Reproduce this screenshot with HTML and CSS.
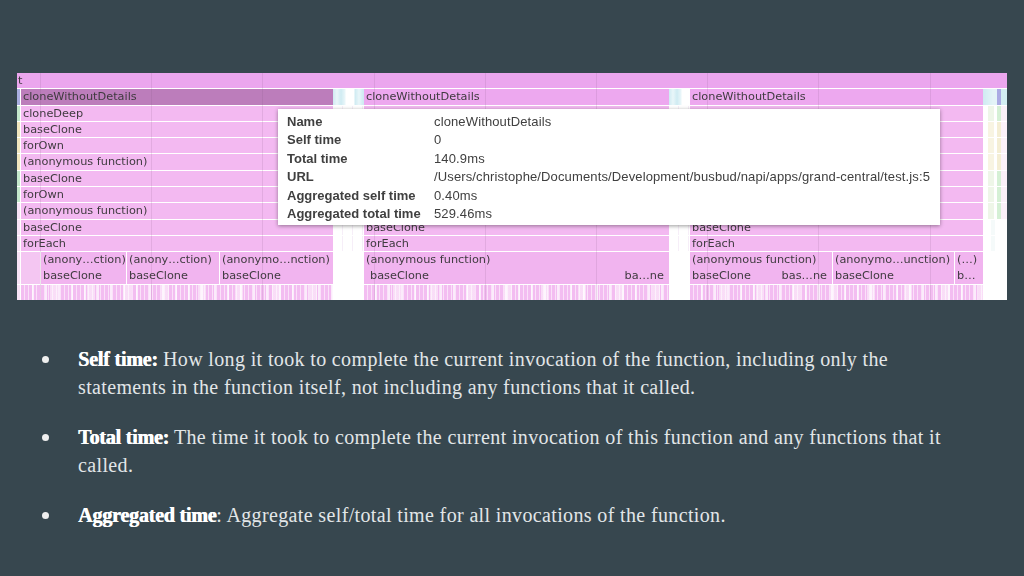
FILE: index.html
```html
<!DOCTYPE html>
<html>
<head>
	<meta charset="utf-8">
	<title>Self time and total time</title>
	<link rel="stylesheet" href="styles.css">
</head>
<body>
	<div class="chart">
		<div class="row row-top"><div class="bar bar-top">t</div></div>

		<div class="row">
			<div class="edge edge-blue"></div>
			<div class="bar bar-selected">cloneWithoutDetails</div>
			<div class="noise noise-cyan"></div>
			<div class="bar bar-strong">cloneWithoutDetails</div>
			<div class="noise noise-cyan"></div>
			<div class="bar bar-strong">cloneWithoutDetails</div>
			<div class="noise noise-end"></div>
		</div>

		<div class="row"><div class="edge edge-green"></div><div class="bar">cloneDeep</div><div class="noise"></div><div class="bar"></div><div class="noise"></div><div class="bar"></div><div class="noise noise-green"></div></div>
		<div class="row"><div class="edge edge-yellow"></div><div class="bar">baseClone</div><div class="noise"></div><div class="bar"></div><div class="noise"></div><div class="bar"></div><div class="noise noise-yellow"></div></div>
		<div class="row"><div class="edge edge-yellow"></div><div class="bar">forOwn</div><div class="noise"></div><div class="bar"></div><div class="noise"></div><div class="bar"></div><div class="noise noise-yellow"></div></div>
		<div class="row"><div class="edge edge-yellow"></div><div class="bar">(anonymous function)</div><div class="noise"></div><div class="bar"></div><div class="noise"></div><div class="bar"></div><div class="noise noise-yellow"></div></div>
		<div class="row"><div class="edge edge-green"></div><div class="bar">baseClone</div><div class="noise"></div><div class="bar"></div><div class="noise"></div><div class="bar"></div><div class="noise noise-green"></div></div>
		<div class="row"><div class="edge edge-green"></div><div class="bar">forOwn</div><div class="noise"></div><div class="bar"></div><div class="noise"></div><div class="bar"></div><div class="noise noise-green"></div></div>
		<div class="row"><div class="edge"></div><div class="bar">(anonymous function)</div><div class="noise"></div><div class="bar"></div><div class="noise"></div><div class="bar"></div><div class="noise noise-green"></div></div>
		<div class="row"><div class="edge"></div><div class="bar">baseClone</div><div class="noise"></div><div class="bar">baseClone</div><div class="noise"></div><div class="bar">baseClone</div><div class="noise noise-faint"></div></div>
		<div class="row"><div class="edge"></div><div class="bar">forEach</div><div class="noise"></div><div class="bar">forEach</div><div class="noise"></div><div class="bar">forEach</div><div class="noise noise-faint"></div></div>

		<div class="row">
			<div class="edge"></div>
			<div class="split split-left">
				<div class="bar bar-low bar-empty"></div>
				<div class="bar bar-low">(anony…ction)</div>
				<div class="bar bar-low">(anony…ction)</div>
				<div class="bar bar-low">(anonymo…nction)</div>
			</div>
			<div class="blank"></div>
			<div class="bar bar-low">(anonymous function)</div>
			<div class="blank"></div>
			<div class="split split-right">
				<div class="bar bar-low">(anonymous function)</div>
				<div class="bar bar-low">(anonymo…unction)</div>
				<div class="bar bar-low">(…)</div>
			</div>
			<div class="blank"></div>
		</div>

		<div class="row">
			<div class="edge"></div>
			<div class="split split-left">
				<div class="bar bar-low bar-empty"></div>
				<div class="bar bar-low">baseClone</div>
				<div class="bar bar-low">baseClone</div>
				<div class="bar bar-low">baseClone</div>
			</div>
			<div class="blank"></div>
			<div class="bar bar-low bar-ends"><span class="nudge">baseClone</span><span>ba…ne</span></div>
			<div class="blank"></div>
			<div class="split split-right">
				<div class="bar bar-low bar-ends"><span>baseClone</span><span>bas…ne</span></div>
				<div class="bar bar-low">baseClone</div>
				<div class="bar bar-low">b…</div>
			</div>
			<div class="blank"></div>
		</div>

		<div class="row">
			<div class="edge"></div>
			<div class="code"></div>
			<div class="blank"></div>
			<div class="code"></div>
			<div class="blank"></div>
			<div class="code"></div>
			<div class="blank"></div>
		</div>

		<div class="ticks"></div>

		<div class="tooltip">
			<div class="tip-key">Name</div><div class="tip-val">cloneWithoutDetails</div>
			<div class="tip-key">Self time</div><div class="tip-val">0</div>
			<div class="tip-key">Total time</div><div class="tip-val">140.9ms</div>
			<div class="tip-key">URL</div><div class="tip-val">/Users/christophe/Documents/Development/busbud/napi/apps/grand-central/test.js:5</div>
			<div class="tip-key">Aggregated self time</div><div class="tip-val">0.40ms</div>
			<div class="tip-key">Aggregated total time</div><div class="tip-val">529.46ms</div>
		</div>
	</div>

	<ul class="notes">
		<li><p><b>Self time:</b><span> How long it took to complete the current invocation of the function, including only the</span><span class="next-line">statements in the function itself, not including any functions that it called.</span></p></li>
		<li><p><b>Total time:</b><span> The time it took to complete the current invocation of this function and any functions that it</span><span class="next-line">called.</span></p></li>
		<li><p><b>Aggregated time</b><span>: Aggregate self/total time for all invocations of the function.</span></p></li>
	</ul>
</body>
</html>
```

FILE: styles.css
```css
*
{
	box-sizing: border-box;
}
body
{
	margin: 0px;
	width: 1024px;
	height: 576px;
	overflow: hidden;
	background-color: #37474F;
	padding: 73px 17px 0px 17px;
}
p
{
	margin: 0px;
}

/* flame chart */
.chart
{
	position: relative;
	width: 990px;
	height: 227px;
	background-color: #FFFFFF;
	display: grid;
	grid-template-rows: repeat(14, 1fr);
	row-gap: 1px;
	font-family: "DejaVu Sans", sans-serif;
	font-size: 11.3px;
	color: #3F3A3F;
	filter: blur(0.4px);
}
.row
{
	display: grid;
	grid-template-columns: 4px 312px 31px 305px 21px 293px 24px;
	min-height: 0px;
}
.row-top
{
	display: block;
}
.bar
{
	background-color: #F3B9F1;
	padding-left: 2px;
	line-height: 16px;
	white-space: nowrap;
	overflow: hidden;
	min-width: 0px;
}
.bar-top
{
	height: 100%;
	padding-left: 1px;
	background-color: #EBA6EE;
}
.bar-selected
{
	background-color: #BC7DBB;
	padding-left: 2px;
}
.bar-strong
{
	background-color: #EDA8EF;
}
.bar-low
{
	background-color: #F1B4EF;
}
.bar-empty
{
	background-color: #F4C6F2;
}
.bar-ends
{
	display: flex;
	justify-content: space-between;
	padding-right: 5px;
}
.nudge
{
	margin-left: 4px;
}
.split
{
	display: grid;
	column-gap: 1px;
	min-width: 0px;
}
.split-left
{
	grid-template-columns: 19px 85px 92px 1fr;
}
.split-right
{
	grid-template-columns: 142px 121px 1fr;
	column-gap: 1px;
}

/* thin left column */
.edge
{
	background-color: #F7E3F6;
	margin-right: 1px;
}
.edge-blue
{
	background-color: #A9AEE0;
}
.edge-green
{
	background-color: #C4E8CC;
}
.edge-yellow
{
	background-color: #F1E6BE;
}

/* narrow calls between the bars */
.noise
{
	background: repeating-linear-gradient(90deg, transparent 0px, transparent 9px, #F6EEF8 9px, #F6EEF8 10px);
}
.noise-cyan
{
	background: linear-gradient(90deg, #CFEBF2 0px, #E9F6F9 4px, #CFEBF2 8px, #E9F6F9 12px, #FFFFFF 13px, #FFFFFF 21px, #CFEBF2 22px, #E9F6F9 26px, #CFEBF2 30px);
}
.noise-end
{
	background: linear-gradient(90deg, #CFEBF2 0px, #E4F4F7 10px, #E4F4F7 14px, #ABABE3 14px, #ABABE3 18px, #D3EEF2 18px, #D3EEF2 24px);
}
.noise-green
{
	background: linear-gradient(90deg, #FFFFFF 0px, #FFFFFF 5px, #EEF6E8 5px, #EEF6E8 11px, #FFFFFF 11px, #FFFFFF 14px, #D5F0D5 14px, #D5F0D5 18px, #FBF1F9 18px);
}
.noise-yellow
{
	background: linear-gradient(90deg, #FFFFFF 0px, #FFFFFF 5px, #F8F4E2 5px, #F8F4E2 11px, #FFFFFF 11px, #FFFFFF 14px, #F4EED4 14px, #F4EED4 18px, #FBF1F9 18px);
}
.noise-faint
{
	background: linear-gradient(90deg, #FFFFFF 0px, #FFFFFF 8px, #F5FAFA 8px, #F5FAFA 12px, #FFFFFF 12px);
}
.blank
{
	background-color: #FFFFFF;
}

/* bottom strip of small calls */
.code
{
	background-color: #F3BDF1;
	background-image:
		repeating-linear-gradient(90deg, transparent 0px, transparent 3px, rgba(255, 255, 255, 0.55) 3px, rgba(255, 255, 255, 0.55) 4px),
		repeating-linear-gradient(90deg, transparent 0px, transparent 11px, rgba(255, 255, 255, 0.7) 11px, rgba(255, 255, 255, 0.7) 13px),
		repeating-linear-gradient(90deg, transparent 0px, transparent 29px, rgba(250, 225, 248, 0.9) 29px, rgba(250, 225, 248, 0.9) 37px);
}

/* faint time grid, over the bars */
.ticks
{
	position: absolute;
	top: 0px;
	left: 23px;
	width: 925px;
	height: 100%;
	background: repeating-linear-gradient(90deg, rgba(120, 80, 120, 0.14) 0px, rgba(120, 80, 120, 0.14) 1px, transparent 1px, transparent 111.2px);
	pointer-events: none;
}

.tooltip
{
	position: absolute;
	top: 36px;
	left: 261px;
	width: 662px;
	height: 116px;
	background-color: #FFFFFF;
	box-shadow: 0px 1px 4px rgba(0, 0, 0, 0.4);
	padding: 3px 9px;
	display: grid;
	grid-template-columns: 147px 1fr;
	grid-auto-rows: 18.5px;
	align-items: center;
	font-family: "Liberation Sans", sans-serif;
	font-size: 13px;
	color: #404040;
	z-index: 2;
}
.tip-key
{
	font-weight: bold;
}
.tip-val
{
	letter-spacing: 0.13px;
	white-space: nowrap;
}

/* notes below the chart */
.notes
{
	list-style: none;
	margin: 45px 0px 0px 0px;
	padding: 0px 0px 0px 25px;
	width: 960px;
	font-family: "Liberation Serif", serif;
	font-size: 20px;
	letter-spacing: 0.36px;
	line-height: 28px;
	color: #E2E6E8;
}
.notes li
{
	display: flex;
	margin-bottom: 22px;
}
.notes p
{
	width: 880px;
}
.notes li::before
{
	content: "";
	flex: none;
	width: 7px;
	height: 7px;
	margin: 11px 29px 0px 0px;
	border-radius: 50%;
	background-color: #EFEFEF;
}
.notes b
{
	color: #FFFFFF;
	letter-spacing: -0.2px;
	text-shadow: 0.6px 0px 0px #FFFFFF;
}
.next-line
{
	display: block;
}
```
